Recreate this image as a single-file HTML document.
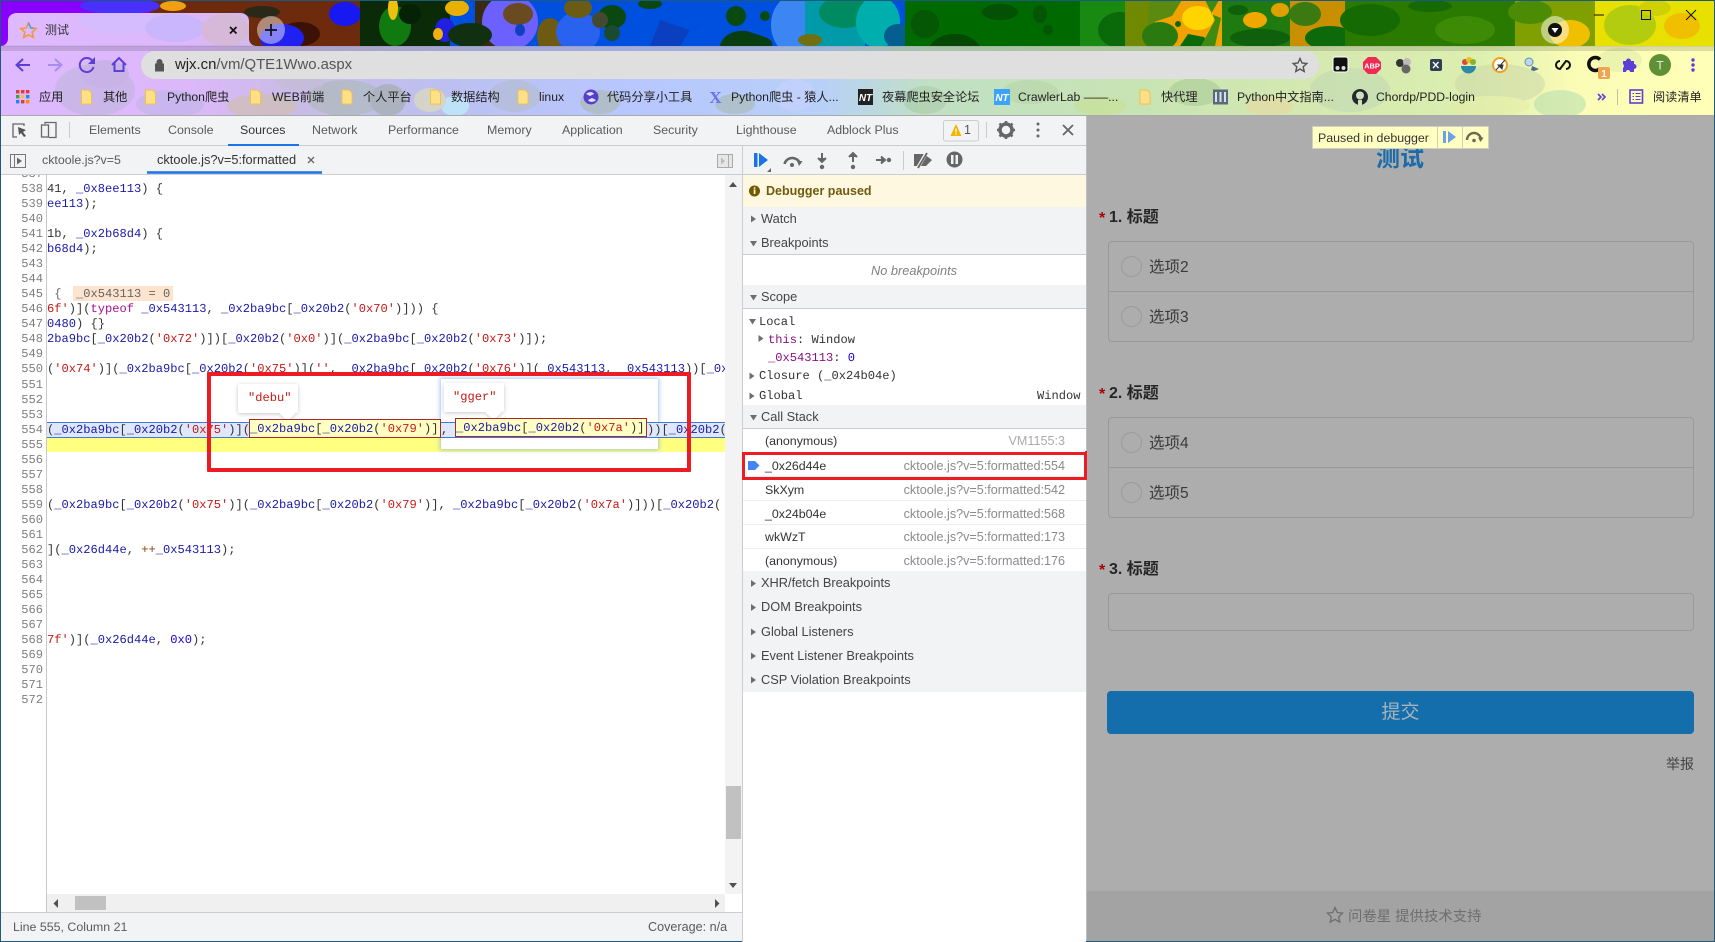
<!DOCTYPE html>
<html lang="zh"><head><meta charset="utf-8"><title>测试</title>
<style>
html,body{margin:0;padding:0;width:1715px;height:942px;overflow:hidden;background:#fff}
body{position:relative;font-family:"Liberation Sans","Noto Sans CJK SC",sans-serif;font-size:12px;color:#222}
div,svg{position:absolute}
.t{white-space:nowrap;line-height:16px;height:16px}
.m{font-family:"Liberation Mono","Noto Sans CJK SC",monospace;font-size:12.08px;text-rendering:geometricPrecision;white-space:pre;line-height:15px;height:15px;color:#333}
.m i{font-style:normal;color:#1a1aa6}.m b{font-weight:normal;color:#c41a16}.m u{text-decoration:none;color:#aa0d91}.m em{font-style:normal;color:#1c00cf}.m s{text-decoration:none;color:#8b4513}
.n{font-family:"Liberation Mono",monospace;font-size:12.08px;text-rendering:geometricPrecision;color:#7f7f7f;left:0;width:43px;text-align:right;line-height:15px;height:15px}
.bm{font-size:12.2px;color:#222}
.tb{font-size:12.4px;color:#5a5a5a;top:122px}
.h{left:761px;font-size:12.8px;color:#444}
.sec{left:743px;width:343px;background:#f1f3f5}
.w{background:#fff}
.cn{left:765px;font-size:12.4px;color:#333}
.cr{right:650px;font-size:12.6px;color:#8a8a8a}
.q{font-weight:bold;font-size:16px;color:#262626;left:1109px;line-height:20px;height:20px;white-space:nowrap}
.st{color:#b00000;left:1099px;font-size:16px;font-weight:bold;line-height:20px;height:20px}
.op{font-size:15.5px;color:#3a3a3a;left:1149px;line-height:20px;height:20px;white-space:nowrap}
.rd{width:19px;height:19px;border:1px solid #9a9a9a;border-radius:50%;left:1121px}
.box{left:1108px;width:584px;border:1px solid #999;border-radius:4px;box-sizing:content-box}
.tip{background:#fff;box-shadow:0 1px 4px rgba(0,0,0,.22);border-radius:2px;width:60px;height:29px}
</style></head><body>

<svg style="left:0;top:0" width="1715" height="116" viewBox="0 0 1715 116">
<defs>
<linearGradient id="lg" x1="0" x2="1" y1="0" y2="0">
<stop offset="0" stop-color="#dfb9ff"/><stop offset=".11" stop-color="#dcb8fa"/><stop offset=".17" stop-color="#c9bce6"/><stop offset=".26" stop-color="#bcc0f0"/><stop offset=".36" stop-color="#b8c6ff"/><stop offset=".48" stop-color="#b8d0f8"/><stop offset=".54" stop-color="#c0e0c4"/><stop offset=".66" stop-color="#c8e4b4"/><stop offset=".76" stop-color="#d4e8b0"/><stop offset=".86" stop-color="#dcefb0"/><stop offset=".92" stop-color="#fbfcb6"/><stop offset="1" stop-color="#ffffb8"/>
</linearGradient>
<clipPath id="lc"><path d="M0 46H116V116H0ZM0 46C6 46 8 42 8 38V21C8 16 12 13 17 13H240C245 13 249 16 249 21V38C249 42 251 46 257 46H1715V116H0Z"/></clipPath>
</defs>
<rect width="1715" height="46" fill="#0050e0"/>
<rect x="0" y="0" width="160" height="46" fill="#8a00ff"/>
<rect x="150" y="0" width="215" height="46" fill="#6e2a0c"/>
<ellipse cx="120" cy="6" rx="40" ry="8" fill="#4a30ff"/>
<ellipse cx="173" cy="6" rx="13" ry="5" fill="#f0a010"/>
<ellipse cx="262" cy="12" rx="18" ry="6" fill="#2a2818"/>
<ellipse cx="300" cy="34" rx="20" ry="12" fill="#3c1206"/>
<ellipse cx="345" cy="14" rx="16" ry="12" fill="#1818f0"/>
<ellipse cx="282" cy="38" rx="22" ry="14" fill="#2020f0"/>
<rect x="360" y="0" width="90" height="46" fill="#0a2a08"/>
<ellipse cx="395" cy="26" rx="16" ry="20" fill="#107a10"/>
<ellipse cx="393" cy="8" rx="5" ry="12" fill="#f0c010"/>
<ellipse cx="410" cy="14" rx="11" ry="10" fill="#062206"/>
<ellipse cx="445" cy="30" rx="10" ry="12" fill="#2020e0"/>
<ellipse cx="438" cy="34" rx="5" ry="6" fill="#f0b010"/>
<ellipse cx="457" cy="8" rx="12" ry="8" fill="#e8b000"/>
<rect x="475" y="0" width="20" height="46" fill="#3a2a10"/>
<ellipse cx="510" cy="22" rx="28" ry="28" fill="#6c60ff"/>
<ellipse cx="470" cy="35" rx="22" ry="12" fill="#103010"/>
<ellipse cx="518" cy="14" rx="15" ry="11" fill="#6a4a20"/>
<ellipse cx="550" cy="36" rx="13" ry="18" fill="#6e5a10"/>
<ellipse cx="578" cy="32" rx="22" ry="20" fill="#2a62f0"/>
<ellipse cx="578" cy="8" rx="14" ry="10" fill="#6a5c14"/>
<ellipse cx="612" cy="17" rx="14" ry="12" fill="#0a4810"/>
<ellipse cx="600" cy="20" rx="8" ry="8" fill="#444a30"/>
<ellipse cx="612" cy="33" rx="8" ry="8" fill="#1a4a30"/>
<ellipse cx="520" cy="30" rx="5" ry="6" fill="#1040c0"/>
<ellipse cx="650" cy="4" rx="12" ry="5" fill="#0a4810"/>
<path d="M660 20L690 30L680 46H650Z" fill="#0a40c0"/>
<ellipse cx="736" cy="16" rx="10" ry="10" fill="#0a4a10"/>
<path d="M720 46C722 34 738 28 750 32C760 36 775 38 772 46Z" fill="#083e10"/>
<ellipse cx="765" cy="16" rx="5" ry="5" fill="#0a4a10"/>
<ellipse cx="795" cy="25" rx="24" ry="30" fill="#3b86f2"/>
<rect x="805" y="0" width="60" height="46" fill="#009aa8"/>
<ellipse cx="845" cy="12" rx="26" ry="16" fill="#008a60"/>
<ellipse cx="810" cy="40" rx="12" ry="6" fill="#707010"/>
<ellipse cx="878" cy="22" rx="22" ry="26" fill="#00aeae"/>
<ellipse cx="898" cy="36" rx="14" ry="12" fill="#045e90"/>
<rect x="905" y="0" width="190" height="46" fill="#006a00"/>
<ellipse cx="925" cy="24" rx="14" ry="14" fill="#055605"/>
<path d="M930 46C935 34 965 26 980 46Z" fill="#044804"/>
<ellipse cx="1040" cy="14" rx="7" ry="9" fill="#055505"/>
<ellipse cx="1000" cy="12" rx="18" ry="8" fill="#045004"/>
<ellipse cx="1048" cy="30" rx="5" ry="5" fill="#055505"/>
<rect x="1080" y="0" width="60" height="46" fill="#188a12"/>
<ellipse cx="1120" cy="30" rx="22" ry="18" fill="#0a6a0a"/>
<rect x="1125" y="0" width="45" height="46" fill="#6f8a00"/>
<rect x="1155" y="0" width="70" height="46" fill="#f2a200"/>
<ellipse cx="1198" cy="18" rx="16" ry="12" fill="#ffd400"/>
<ellipse cx="1160" cy="36" rx="18" ry="14" fill="#2a7a10"/>
<path d="M1150 0h32l-10 16-24 8z" fill="#5a8a10"/>
<path d="M1180 46l8-12 16 3 6 9z" fill="#0a6a0a"/>
<ellipse cx="1178" cy="24" rx="3" ry="3" fill="#0a6a0a"/>
<path d="M1205 0h14l-8 14 10 4-6 28h-14l14-26z" fill="#3f8a10"/>
<rect x="1222" y="0" width="75" height="46" fill="#1f7a10"/>
<ellipse cx="1255" cy="20" rx="12" ry="8" fill="#f0a800"/>
<ellipse cx="1260" cy="38" rx="30" ry="9" fill="#0e600c"/>
<ellipse cx="1238" cy="10" rx="10" ry="5" fill="#0e600c"/>
<ellipse cx="1280" cy="10" rx="9" ry="7" fill="#e0a000"/>
<rect x="1290" y="0" width="60" height="46" fill="#c89000"/>
<ellipse cx="1305" cy="14" rx="16" ry="12" fill="#3a7a10"/>
<ellipse cx="1330" cy="38" rx="25" ry="12" fill="#0c6a0a"/>
<rect x="1345" y="0" width="175" height="46" fill="#2a7a00"/>
<ellipse cx="1370" cy="20" rx="30" ry="16" fill="#156a04"/>
<ellipse cx="1465" cy="30" rx="30" ry="14" fill="#3d8a06"/>
<ellipse cx="1430" cy="6" rx="22" ry="6" fill="#156a04"/>
<rect x="1515" y="0" width="85" height="46" fill="#7fa000"/>
<ellipse cx="1570" cy="34" rx="20" ry="14" fill="#f0c000"/>
<ellipse cx="1530" cy="12" rx="22" ry="12" fill="#4c8c04"/>
<rect x="1595" y="0" width="120" height="46" fill="#e8e000"/>
<ellipse cx="1630" cy="25" rx="26" ry="20" fill="#b4cc10"/>
<ellipse cx="1682" cy="26" rx="18" ry="13" fill="#f0c000"/>
<ellipse cx="1655" cy="8" rx="16" ry="8" fill="#cfd000"/>

<g clip-path="url(#lc)">
<rect y="0" width="1715" height="116" fill="url(#lg)"/>
<g opacity=".55">
<ellipse cx="125" cy="20" rx="45" ry="14" fill="#ccc0ff"/>
<ellipse cx="175" cy="28" rx="30" ry="14" fill="#bcb4ff"/>
<ellipse cx="225" cy="30" rx="24" ry="16" fill="#d8b8c4"/>
<ellipse cx="95" cy="90" rx="40" ry="26" fill="#bab4d8"/>
<ellipse cx="105" cy="74" rx="24" ry="14" fill="#b8b0d4"/>
<ellipse cx="170" cy="104" rx="34" ry="14" fill="#bcb4e4"/>
<ellipse cx="262" cy="106" rx="35" ry="12" fill="#d0c0a4"/>
<ellipse cx="345" cy="98" rx="38" ry="18" fill="#a8b8b0"/>
<ellipse cx="300" cy="82" rx="24" ry="8" fill="#c4bcd0"/>
<ellipse cx="388" cy="100" rx="18" ry="16" fill="#9caa9c"/>
<ellipse cx="455" cy="106" rx="14" ry="10" fill="#bfffff"/>
<ellipse cx="430" cy="100" rx="16" ry="12" fill="#e8e4a8"/>
<ellipse cx="515" cy="96" rx="26" ry="16" fill="#b2bcc8"/>
<ellipse cx="600" cy="102" rx="20" ry="12" fill="#aab8a0"/>
<ellipse cx="735" cy="104" rx="20" ry="10" fill="#a8b8a8"/>
<ellipse cx="795" cy="95" rx="20" ry="16" fill="#c8d4ff"/>
<ellipse cx="925" cy="100" rx="22" ry="14" fill="#a8c8a4"/>
<ellipse cx="1030" cy="92" rx="28" ry="12" fill="#b4d4a8"/>
<ellipse cx="1100" cy="106" rx="26" ry="10" fill="#c8e090"/>
<ellipse cx="1195" cy="92" rx="26" ry="14" fill="#a8c894"/>
<ellipse cx="1270" cy="106" rx="24" ry="10" fill="#ecd8a0"/>
<ellipse cx="1350" cy="90" rx="40" ry="22" fill="#c0d8b4"/>
<ellipse cx="1500" cy="84" rx="45" ry="20" fill="#ccd8a8"/>
<ellipse cx="1560" cy="104" rx="26" ry="14" fill="#b4dcb0"/>
<ellipse cx="1490" cy="106" rx="40" ry="10" fill="#e4eca8"/>
<ellipse cx="1620" cy="60" rx="22" ry="12" fill="#dceca8"/>
</g>
<rect y="46" width="1715" height="5" fill="#000" opacity=".13"/>
<rect x="0" y="45.500" width="1715" height="1" fill="#000" opacity=".1"/>
</g>
<rect x="0" y="0" width="1715" height="1" fill="#1a5a80"/>

<!-- tab icons -->
<path d="M28.500 23l2.300 5 5.400.6-4 3.600 1.100 5.300-4.800-2.700-4.800 2.700 1.100-5.300-4-3.600 5.400-.6z" fill="none" stroke="#f29a3a" stroke-width="1.600"/>
<path d="M28.500 23l2.300 5h3" fill="none" stroke="#4aa0e0" stroke-width="1.600"/>
<path d="M230 27l6.500 6.500M236.500 27l-6.500 6.500" stroke="#111" stroke-width="1.700"/>
<circle cx="271" cy="30" r="14" fill="#fff" opacity=".45"/>
<path d="M265 30h12M271 24v12" stroke="#111" stroke-width="1.700"/>
<!-- nav -->
<g fill="none" stroke="#5b3fd6" stroke-width="2">
<path d="M30 65H17M23 59l-6.500 6 6.500 6"/>
<path d="M48 65h13M55 59l6.500 6-6.500 6" stroke="#a98cf0"/>
<path d="M92.500 61a7 7 0 1 0 1 6"/>
<path d="M112 65l7-7 7 7M114.500 63v8h9v-8"/>
</g>
<path d="M95 57v7h-7z" fill="#5b3fd6"/>
<rect x="141" y="51" width="1178" height="28" rx="14" fill="#dfdfdf"/>
<path d="M155.500 64h8v7h-8zM157 64v-2a2.500 2.500 0 0 1 5 0v2" fill="#555" stroke="#555" stroke-width="1"/>
<path d="M1300 58.500l2 4.500 4.800.5-3.600 3.200 1 4.800-4.200-2.500-4.200 2.500 1-4.800-3.600-3.200 4.800-.5z" fill="none" stroke="#555" stroke-width="1.400"/>
<!-- window -->
<path d="M1594 15h10" stroke="#111" stroke-width="1"/><rect x="1641.500" y="10.500" width="9" height="9" fill="none" stroke="#111"/>
<path d="M1686 10l10 10M1696 10l-10 10" stroke="#111" stroke-width="1"/>
<circle cx="1555" cy="30" r="14" fill="#fff" opacity=".5"/><circle cx="1555" cy="30" r="7" fill="#111"/><path d="M1551.500 28h7l-3.500 5z" fill="#fff"/>
<!-- extensions -->
<rect x="1333" y="57" width="15" height="15" rx="2.500" fill="#111" stroke="#fff"/><circle cx="1337.500" cy="68" r="2" fill="#ddd"/><circle cx="1343.500" cy="68" r="2" fill="#ddd"/>
<path d="M1368 57h8l5 5v7l-5 5h-8l-5-5v-7z" fill="#ee2a55"/><text x="1372" y="68.500" text-anchor="middle" font-size="7.500" font-weight="bold" fill="#fff" font-family="Liberation Sans">ABP</text>
<circle cx="1400" cy="63" r="4" fill="#333"/><circle cx="1407" cy="62" r="4" fill="#bbb"/><circle cx="1406" cy="69" r="4.500" fill="#666"/>
<rect x="1430" y="59" width="12" height="12" rx="2" fill="#2d3f50"/><path d="M1433 62l5.500 6M1438.500 62l-5.500 6" stroke="#fff" stroke-width="1.400"/>
<path d="M1461 66h15a7.500 7.500 0 0 1-15 0z" fill="#2a8aa8"/><circle cx="1465" cy="62" r="3" fill="#d84a3a"/><circle cx="1469" cy="60" r="3" fill="#e8c020"/><circle cx="1473" cy="62" r="3" fill="#8ab030"/>
<circle cx="1500" cy="65" r="7" fill="#fff" stroke="#f0a020" stroke-width="2"/><path d="M1496 70l9-10M1498 65h5l-1 4z" fill="#333" stroke="#333" stroke-width="1"/>
<circle cx="1529" cy="62" r="4" fill="#b8d8f0" stroke="#6a90b0"/><path d="M1532 66l7 3-5 2-3-1z" fill="#4a6a8a"/>
<path d="M1560 61a4 4 0 1 0 0 8l6-8a4 4 0 1 1 0 8" fill="none" stroke="#111" stroke-width="2"/>
<path d="M1603 60a6.500 6.500 0 1 0 0 9" fill="none" stroke="#111" stroke-width="3.500" transform="translate(-3 -.5)"/>
<rect x="1598" y="67" width="12" height="12" rx="2" fill="#eea550"/><text x="1604" y="77" text-anchor="middle" font-size="10" font-weight="bold" fill="#fff" font-family="Liberation Sans">1</text>
<path d="M1623 61h3a2.500 2.500 0 0 1 5 0h3v3a2.500 2.500 0 0 1 0 5v3h-4a2 2 0 0 0-4 0h-3v-4a2.500 2.500 0 0 0 0-4z" fill="#5b3fd6"/>
<circle cx="1660" cy="65" r="11" fill="#5f9035"/><text x="1660" y="69.500" text-anchor="middle" font-size="12" fill="#e8f0e0" font-family="Liberation Sans">T</text>
<g fill="#5b3fd6"><circle cx="1693" cy="60" r="1.700"/><circle cx="1693" cy="65" r="1.700"/><circle cx="1693" cy="70" r="1.700"/></g>
<!-- bookmarks icons -->
<g><rect x="16" y="90" width="3.400" height="3.400" fill="#e53935"/><rect x="21" y="90" width="3.400" height="3.400" fill="#e53935"/><rect x="26" y="90" width="3.400" height="3.400" fill="#e53935"/><rect x="16" y="95" width="3.400" height="3.400" fill="#43a047"/><rect x="21" y="95" width="3.400" height="3.400" fill="#fbc02d"/><rect x="26" y="95" width="3.400" height="3.400" fill="#1e88e5"/><rect x="16" y="100" width="3.400" height="3.400" fill="#1e88e5"/><rect x="21" y="100" width="3.400" height="3.400" fill="#e53935"/><rect x="26" y="100" width="3.400" height="3.400" fill="#fb8c00"/></g>
<g fill="#ffe08a" stroke="#efc24a" stroke-width="1">
<path d="M81.500 90h7l3 3v11h-10z"/><path d="M145.500 90h7l3 3v11h-10z"/><path d="M250.500 90h7l3 3v11h-10z"/><path d="M342 90h7l3 3v11h-10z"/><path d="M430.500 90h7l3 3v11h-10z"/><path d="M518 90h7l3 3v11h-10z"/><path d="M1140 90h7l3 3v11h-10z"/>
</g>
<circle cx="591" cy="97" r="7.500" fill="#5540c8"/><path d="M586 94c3-3 7-2 8 0l-4 2zM596 100c-3 3-7 2-8 0l4-2z" fill="#dfe0ff"/>
<text x="715.500" y="103" text-anchor="middle" font-size="17" font-weight="bold" fill="#6a70f0" font-family="Liberation Serif">X</text>
<rect x="858" y="89" width="15" height="16" fill="#222"/><text x="865.500" y="101" text-anchor="middle" font-size="10" font-weight="bold" font-style="italic" fill="#fff" font-family="Liberation Sans">NT</text>
<rect x="994" y="89" width="16" height="16" fill="#3ba4f8"/><text x="1002" y="101" text-anchor="middle" font-size="10" font-weight="bold" font-style="italic" fill="#fff" font-family="Liberation Sans">NT</text>
<rect x="1213" y="89.500" width="15" height="15" fill="#5a6a7e"/><path d="M1216 92v10M1220.500 92v10" stroke="#d8e0e8" stroke-width="2"/><path d="M1224 92h2v10h-2z" fill="#d8e0e8"/>
<circle cx="1360" cy="97" r="8" fill="#24292e"/>
<circle cx="1360" cy="95.500" r="4" fill="#cde0c0"/><rect x="1358" y="100" width="4" height="5" fill="#cde0c0"/>
<path d="M1598 94l3 3-3 3M1602 94l3 3-3 3" fill="none" stroke="#5b3fd6" stroke-width="1.600"/>
<path d="M1617.500 89v16" stroke="#999" opacity=".6"/>
<rect x="1630" y="90" width="12.500" height="13" fill="none" stroke="#5b3fd6" stroke-width="1.600"/><path d="M1632.500 93.500h1.500M1635.500 93.500h5M1632.500 96.500h1.500M1635.500 96.500h5M1632.500 99.500h1.500M1635.500 99.500h5" stroke="#5b3fd6"/>
</svg>

<div class="t" style="left:45px;top:22px;color:#333">测试</div>
<div class="t" style="left:175px;top:57px;font-size:14.9px;color:#555"><span style="color:#222">wjx.cn</span>/vm/QTE1Wwo.aspx</div>
<div class="t bm" style="left:39px;top:89px">应用</div>
<div class="t bm" style="left:103px;top:89px">其他</div>
<div class="t bm" style="left:167px;top:89px">Python爬虫</div>
<div class="t bm" style="left:272px;top:89px">WEB前端</div>
<div class="t bm" style="left:363px;top:89px">个人平台</div>
<div class="t bm" style="left:451px;top:89px">数据结构</div>
<div class="t bm" style="left:539px;top:89px">linux</div>
<div class="t bm" style="left:607px;top:89px">代码分享小工具</div>
<div class="t bm" style="left:731px;top:89px">Python爬虫 - 猿人...</div>
<div class="t bm" style="left:882px;top:89px">夜幕爬虫安全论坛</div>
<div class="t bm" style="left:1018px;top:89px">CrawlerLab ——...</div>
<div class="t bm" style="left:1161px;top:89px">快代理</div>
<div class="t bm" style="left:1237px;top:89px">Python中文指南...</div>
<div class="t bm" style="left:1376px;top:89px">Chordp/PDD-login</div>
<div class="t bm" style="left:1653px;top:89px">阅读清单</div>

<!-- devtools -->
<div style="left:1px;top:116px;width:1085px;height:825px;background:#f2f3f5"></div>
<div style="left:0;top:115px;width:1715px;height:1px;background:#aaa"></div>
<div style="left:0;top:0;width:1px;height:942px;background:#1d5a7c"></div>
<div style="left:0;top:941px;width:1715px;height:1px;background:#1d5a7c"></div>
<div style="left:1714px;top:0;width:1px;height:942px;background:#1d5a7c"></div>
<div style="left:1px;top:145px;width:1085px;height:1px;background:#cbcdd1"></div>
<div style="left:1px;top:174px;width:1085px;height:1px;background:#cbcdd1"></div>
<svg style="left:0;top:116px" width="1086" height="58" viewBox="0 116 1086 58">
<path d="M24 126v-2H13v13h4" fill="none" stroke="#666" stroke-width="1.300"/><path d="M18 127l8 3-3 2 3 4-2 1-3-4-2 2z" fill="#555"/>
<rect x="41.500" y="125" width="7" height="12" fill="none" stroke="#666" stroke-width="1.300"/><path d="M45 124v-1.500h11v15H49" fill="none" stroke="#666" stroke-width="1.300"/>
<path d="M69.500 122v16" stroke="#ccc"/>
<rect x="943.500" y="120.500" width="35" height="20.500" rx="2" fill="none" stroke="#ccc"/>
<path d="M956 124l-5.500 12h11z" fill="#f4b400"/><path d="M956 128.500v4" stroke="#fff" stroke-width="1.300"/><circle cx="956" cy="134" r=".8" fill="#fff"/>
<path d="M986.500 122v16" stroke="#ccc"/>
<circle cx="1006" cy="130" r="6" fill="none" stroke="#666" stroke-width="3.500"/><path d="M1006 121v3M1006 136v3M997 130h3M1012 130h3M999.500 123.500l2.200 2.200M1010.300 134.300l2.200 2.200M1012.500 123.500l-2.200 2.200M1001.700 134.300l-2.200 2.200" stroke="#666" stroke-width="2.500"/>
<g fill="#666"><circle cx="1038" cy="124" r="1.500"/><circle cx="1038" cy="130" r="1.500"/><circle cx="1038" cy="136" r="1.500"/></g>
<path d="M1063 125l10 10M1073 125l-10 10" stroke="#666" stroke-width="1.800"/>
<rect x="10.500" y="154.500" width="15" height="13" fill="none" stroke="#777"/><path d="M14.500 155v12" stroke="#777"/><path d="M17 157.500l5 3.500-5 3.500z" fill="#666"/>
<path d="M147 172.500h175" stroke="#1a73e8" stroke-width="2.500" /><path d="M228 145h71" stroke="#1a73e8" stroke-width="2"/>
<path d="M308 157l6 6M314 157l-6 6" stroke="#666" stroke-width="1.300"/>
<rect x="717.500" y="154.500" width="15" height="13" fill="#e6e6e6" stroke="#aaa"/><path d="M728.500 155v12" stroke="#aaa"/><path d="M721 157.500v7l4-3.500z" fill="#bbb"/>
<path d="M742.500 146v28" stroke="#cbcdd1"/>
<rect x="754" y="153" width="3.500" height="14" fill="#1a73e8"/><path d="M759 153l9 7-9 7z" fill="#1a73e8"/><path d="M771 172v-4l-4 4z" fill="#666"/>
<path d="M784.500 164a8 8 0 0 1 15.500 0" fill="none" stroke="#666" stroke-width="2.500"/><path d="M797 161l5.500 0-3.500 5z" fill="#666"/><circle cx="792" cy="165" r="2" fill="#666"/>
<path d="M822 153v7M818 158l4 4 4-4" fill="#666" stroke="#666" stroke-width="2"/><circle cx="822" cy="167" r="2.200" fill="#666"/>
<path d="M853 162v-8M849 157l4-4 4 4" fill="#666" stroke="#666" stroke-width="2"/><circle cx="853" cy="167" r="2.200" fill="#666"/>
<path d="M876 160h8M881 156.500l4 3.500-4 3.500" fill="#666" stroke="#666" stroke-width="2"/><circle cx="889" cy="160" r="2.200" fill="#666"/>
<path d="M903.500 151v19" stroke="#ccc"/>
<path d="M914 154h10l8 6-6 6h-12z" fill="#666"/><path d="M916 171l12-21" stroke="#f2f3f5" stroke-width="3.500"/><path d="M918 168l9-15" stroke="#666" stroke-width="1.800"/>
<circle cx="954.500" cy="159.500" r="8" fill="#666"/><rect x="951" y="155" width="2.500" height="9" fill="#f2f3f5"/><rect x="955.500" y="155" width="2.500" height="9" fill="#f2f3f5"/>
</svg>
<div class="t tb" style="left:89px">Elements</div>
<div class="t tb" style="left:168px">Console</div>
<div class="t tb" style="left:240px;color:#333">Sources</div>
<div class="t tb" style="left:312px">Network</div>
<div class="t tb" style="left:388px">Performance</div>
<div class="t tb" style="left:487px">Memory</div>
<div class="t tb" style="left:562px">Application</div>
<div class="t tb" style="left:653px">Security</div>
<div class="t tb" style="left:736px">Lighthouse</div>
<div class="t tb" style="left:827px">Adblock Plus</div>
<div class="t" style="left:964px;top:122px;color:#555;font-size:12.500px">1</div>
<div class="t tb" style="left:42px;top:152px">cktoole.js?v=5</div>
<div class="t tb" style="left:157px;top:152px;color:#333;font-size:12.8px">cktoole.js?v=5:formatted</div>

<!-- editor -->
<div class="w" style="left:1px;top:175px;width:741px;height:737px"></div>
<div style="left:46px;top:175px;width:1px;height:737px;background:#c8c8c8"></div>
<div style="left:725px;top:175px;width:17px;height:719px;background:#f3f3f3"></div>
<div style="left:47px;top:894px;width:678px;height:18px;background:#f0f0f0"></div>
<div style="left:726px;top:786px;width:15px;height:53px;background:#c1c1c1"></div>
<div style="left:75px;top:896px;width:31px;height:14px;background:#c1c1c1"></div>
<svg style="left:0;top:175px" width="742" height="737" viewBox="0 175 742 737">
<path d="M729 187l4-5 4 5z" fill="#505050"/><path d="M729 883l4 5 4-5z" fill="#505050"/><path d="M58 899v9l-4.500-4.500z" fill="#505050"/><path d="M715 899v9l4.500-4.500z" fill="#505050"/>
</svg>
<div class="n" style="top:167px;clip-path:inset(8px 0 0 0)">537</div>
<div class="n" style="top:182px">538</div><div class="n" style="top:197px">539</div><div class="n" style="top:212px">540</div><div class="n" style="top:227px">541</div><div class="n" style="top:242px">542</div><div class="n" style="top:257px">543</div><div class="n" style="top:272px">544</div><div class="n" style="top:287px">545</div><div class="n" style="top:302px">546</div><div class="n" style="top:317px">547</div><div class="n" style="top:332px">548</div><div class="n" style="top:347px">549</div><div class="n" style="top:362px">550</div><div class="n" style="top:378px">551</div><div class="n" style="top:393px">552</div><div class="n" style="top:408px">553</div><div class="n" style="top:423px">554</div><div class="n" style="top:438px">555</div><div class="n" style="top:453px">556</div><div class="n" style="top:468px">557</div><div class="n" style="top:483px">558</div><div class="n" style="top:498px">559</div><div class="n" style="top:513px">560</div><div class="n" style="top:528px">561</div><div class="n" style="top:543px">562</div><div class="n" style="top:558px">563</div><div class="n" style="top:573px">564</div><div class="n" style="top:588px">565</div><div class="n" style="top:603px">566</div><div class="n" style="top:618px">567</div><div class="n" style="top:633px">568</div><div class="n" style="top:648px">569</div><div class="n" style="top:663px">570</div><div class="n" style="top:678px">571</div><div class="n" style="top:693px">572</div>

<div class="m" style="left:47px;top:182px">41, <i>_0x8ee113</i>) {</div>
<div class="m" style="left:47px;top:197px"><i>ee113</i>);</div>
<div class="m" style="left:47px;top:227px">1b, <i>_0x2b68d4</i>) {</div>
<div class="m" style="left:47px;top:242px"><i>b68d4</i>);</div>
<div style="left:73px;top:286px;width:100px;height:15px;background:#fde4cf"></div>
<div class="m" style="left:47px;top:287px;color:#666"> {  _0x543113 = 0</div>
<div class="m" style="left:47px;top:302px"><b>6f'</b>)](<u>typeof</u> <i>_0x543113</i>, <i>_0x2ba9bc</i>[<i>_0x20b2</i>(<b>'0x70'</b>)])) {</div>
<div class="m" style="left:47px;top:317px"><i>0480</i>) {}</div>
<div class="m" style="left:47px;top:332px"><i>2ba9bc</i>[<i>_0x20b2</i>(<b>'0x72'</b>)])[<i>_0x20b2</i>(<b>'0x0'</b>)](<i>_0x2ba9bc</i>[<i>_0x20b2</i>(<b>'0x73'</b>)]);</div>
<div class="m" style="left:47px;top:362px;width:678px;overflow:hidden">(<b>'0x74'</b>)](<i>_0x2ba9bc</i>[<i>_0x20b2</i>(<b>'0x75'</b>)](<b>''</b>, <i>_0x2ba9bc</i>[<i>_0x20b2</i>(<b>'0x76'</b>)](<i>_0x543113</i>, <i>_0x543113</i>))[<i>_0x</i></div>

<div style="left:47px;top:437px;width:678px;height:15px;background:#ffff80"></div>
<div style="left:441px;top:379px;width:217px;height:70px;background:#fff;box-shadow:0 0 4px 1px rgba(90,150,240,.55)"></div>
<div style="left:47px;top:422px;width:678px;height:14px;background:#dfe8fb;border-top:1px solid #3f78e0;border-bottom:1px solid #3f78e0"></div>
<div class="m" style="left:47px;top:423px">(<i>_0x2ba9bc</i>[<i>_0x20b2</i>(<b>'0x75'</b>)](</div>
<div class="m" style="left:441px;top:423px">,</div>
<div class="m" style="left:647px;top:423px;width:78px;overflow:hidden">))[<i>_0x20b2</i>(</div>
<div class="tip" style="left:238px;top:384px"></div>
<div style="left:282px;top:408px;width:11px;height:11px;background:#fff;transform:rotate(45deg);box-shadow:2px 2px 3px rgba(0,0,0,.12)"></div>
<div class="tip" style="left:444px;top:383px"></div>
<div style="left:488px;top:407px;width:11px;height:11px;background:#fff;transform:rotate(45deg);box-shadow:2px 2px 3px rgba(0,0,0,.12)"></div>
<div class="m" style="left:248px;top:391px;color:#c41a16">"debu"</div>
<div class="m" style="left:453px;top:390px;color:#c41a16">"gger"</div>
<div style="left:249px;top:419px;width:190px;height:17px;background:#ffffc4;border:1px solid #a52a2a"></div>
<div class="m" style="left:250px;top:422px"><i>_0x2ba9bc</i>[<i>_0x20b2</i>(<b>'0x79'</b>)]</div>
<div style="left:455px;top:418px;width:190px;height:17px;background:#ffffc4;border:1px solid #a52a2a"></div>
<div class="m" style="left:456px;top:421px"><i>_0x2ba9bc</i>[<i>_0x20b2</i>(<b>'0x7a'</b>)]</div>
<div style="left:207px;top:372px;width:476px;height:92px;border:4px solid #ed1c24;border-radius:1px"></div>

<div class="m" style="left:47px;top:498px;width:678px;overflow:hidden">(<i>_0x2ba9bc</i>[<i>_0x20b2</i>(<b>'0x75'</b>)](<i>_0x2ba9bc</i>[<i>_0x20b2</i>(<b>'0x79'</b>)], <i>_0x2ba9bc</i>[<i>_0x20b2</i>(<b>'0x7a'</b>)]))[<i>_0x20b2</i>(</div>
<div class="m" style="left:47px;top:543px">](<i>_0x26d44e</i>, <s>++</s><i>_0x543113</i>);</div>
<div class="m" style="left:47px;top:633px"><b>7f'</b>)](<i>_0x26d44e</i>, <em>0x0</em>);</div>

<!-- status -->
<div style="left:1px;top:912px;width:741px;height:1px;background:#cbcdd1"></div>
<div class="t" style="left:13px;top:919px;font-size:12.400px;color:#5a5a5a">Line 555, Column 21</div>
<div class="t" style="left:648px;top:919px;font-size:12.600px;color:#5a5a5a">Coverage: n/a</div>

<!-- sidebar -->
<div style="left:742px;top:146px;width:1px;height:796px;background:#cbcdd1"></div>
<div class="w" style="left:743px;top:175px;width:343px;height:767px"></div>
<div style="left:743px;top:175px;width:343px;height:32px;background:#fff8e1"></div>
<div class="sec" style="top:207px;height:47px"></div><div style="left:743px;top:254px;width:343px;height:1px;background:#cbcdd1"></div>
<div class="sec" style="top:285px;height:23px"></div><div style="left:743px;top:308px;width:343px;height:1px;background:#cbcdd1"></div>
<div class="sec" style="top:405px;height:23px"></div><div style="left:743px;top:428px;width:343px;height:1px;background:#cbcdd1"></div>
<div style="left:743px;top:476px;width:343px;height:1px;background:#eee"></div><div style="left:743px;top:500px;width:343px;height:1px;background:#eee"></div><div style="left:743px;top:524px;width:343px;height:1px;background:#eee"></div><div style="left:743px;top:548px;width:343px;height:1px;background:#eee"></div>
<div class="sec" style="top:571px;height:121px"></div>
<svg style="left:743px;top:175px" width="343" height="520" viewBox="743 175 343 520">
<circle cx="754.500" cy="191" r="5.500" fill="#6f5a00"/><rect x="753.700" y="189.500" width="1.700" height="4.500" fill="#fff8e1"/><rect x="753.700" y="187.300" width="1.700" height="1.500" fill="#fff8e1"/>
<g fill="#6e6e6e">
<path d="M751 215.500v7l5-3.500z"/>
<path d="M750 241l3.500 5.500 3.500-5.500zM750 295l3.500 5.500 3.500-5.500zM750 415l3.500 5.500 3.500-5.500z"/>
<path d="M749 319l3.500 5.500 3.500-5.500z"/>
<path d="M758.500 335v7l5-3.500z"/><path d="M749.500 372.500v7l5-3.500zM749.500 392.500v7l5-3.500z"/>
<path d="M751 580v7l5-3.500zM751 604v7l5-3.500zM751 628.500v7l5-3.500zM751 652.500v7l5-3.500zM751 676.500v7l5-3.500z"/>
</g>
<path d="M748 461h7l4.500 4.500-4.500 4.500h-7z" fill="#4285f4"/>
</svg>
<div class="t" style="left:766px;top:183px;font-weight:bold;font-size:12.500px;color:#6f5a10">Debugger paused</div>
<div class="t h" style="top:211px">Watch</div>
<div class="t h" style="top:235px">Breakpoints</div>
<div class="t" style="left:871px;top:263px;font-size:12.800px;font-style:italic;color:#808080">No breakpoints</div>
<div class="t h" style="top:289px">Scope</div>
<div class="m" style="left:759px;top:315px">Local</div>
<div class="m" style="left:768px;top:333px"><u style="color:#881280">this</u>: Window</div>
<div class="m" style="left:768px;top:351px"><u style="color:#881280">_0x543113</u>: <em>0</em></div>
<div class="m" style="left:759px;top:369px">Closure (_0x24b04e)</div>
<div class="m" style="left:759px;top:389px">Global</div>
<div class="m" style="left:1037px;top:389px">Window</div>
<div class="t h" style="top:409px">Call Stack</div>
<div class="t cn" style="top:433px">(anonymous)</div><div class="t cr" style="top:433px;color:#aaa">VM1155:3</div>
<div class="t cn" style="top:458px">_0x26d44e</div><div class="t cr" style="top:458px">cktoole.js?v=5:formatted:554</div>
<div class="t cn" style="top:482px">SkXym</div><div class="t cr" style="top:482px">cktoole.js?v=5:formatted:542</div>
<div class="t cn" style="top:506px">_0x24b04e</div><div class="t cr" style="top:506px">cktoole.js?v=5:formatted:568</div>
<div class="t cn" style="top:529px">wkWzT</div><div class="t cr" style="top:529px">cktoole.js?v=5:formatted:173</div>
<div class="t cn" style="top:553px">(anonymous)</div><div class="t cr" style="top:553px">cktoole.js?v=5:formatted:176</div>
<div class="t h" style="top:575px">XHR/fetch Breakpoints</div>
<div class="t h" style="top:599px">DOM Breakpoints</div>
<div class="t h" style="top:624px">Global Listeners</div>
<div class="t h" style="top:648px">Event Listener Breakpoints</div>
<div class="t h" style="top:672px">CSP Violation Breakpoints</div>
<div style="left:742px;top:452px;width:339px;height:22px;border:3px solid #ed1c24"></div>

<!-- page -->
<div style="left:1086px;top:116px;width:628px;height:825px;background:#adadad"></div>
<div style="left:1086px;top:116px;width:1px;height:825px;background:#bcbcc4"></div>
<div style="left:1087px;top:891px;width:627px;height:50px;background:#a3a3a3"></div>
<div style="left:1085px;top:451px;width:2px;height:29px;background:#ed1c24"></div>

<div class="t" style="left:1300px;width:200px;top:144px;height:30px;line-height:30px;text-align:center;font-size:24px;font-weight:bold;color:#1c6bab">测试</div>
<div style="left:1313px;top:127px;width:175px;height:21px;background:#ffffc2;box-shadow:0 0 0 1px #d0d0c0"></div>
<div style="left:1437px;top:127px;width:1px;height:21px;background:#cfcfc0"></div>
<div style="left:1462px;top:127px;width:1px;height:21px;background:#cfcfc0"></div>
<div class="t" style="left:1318px;top:130px;font-size:12.400px;color:#333">Paused in debugger</div>
<svg style="left:1438px;top:127px" width="50" height="21" viewBox="1438 127 50 21">
<rect x="1443" y="131" width="3" height="12" fill="#6ea0e8"/><path d="M1448 131l8 6-8 6z" fill="#6ea0e8"/>
<path d="M1467 140a7 7 0 0 1 14 0" fill="none" stroke="#6a6a55" stroke-width="2.400"/><path d="M1478 137.500h5.500l-3 4.500z" fill="#6a6a55"/><circle cx="1474" cy="140.500" r="1.800" fill="#6a6a55"/>
</svg>

<div class="st" style="top:209px">*</div><div class="q" style="top:208px">1. 标题</div>
<div class="box" style="top:241px;height:99px"></div>
<div style="left:1108px;top:291px;width:586px;height:1px;background:#999"></div>
<div class="rd" style="top:256px"></div><div class="op" style="top:258px">选项2</div>
<div class="rd" style="top:306px"></div><div class="op" style="top:308px">选项3</div>

<div class="st" style="top:385px">*</div><div class="q" style="top:384px">2. 标题</div>
<div class="box" style="top:417px;height:99px"></div>
<div style="left:1108px;top:467px;width:586px;height:1px;background:#999"></div>
<div class="rd" style="top:432px"></div><div class="op" style="top:434px">选项4</div>
<div class="rd" style="top:482px"></div><div class="op" style="top:484px">选项5</div>

<div class="st" style="top:561px">*</div><div class="q" style="top:560px">3. 标题</div>
<div class="box" style="top:593px;height:36px"></div>

<div style="left:1107px;top:691px;width:587px;height:43px;background:#156eac;border-radius:4px;text-align:center;line-height:43px;font-size:19px;color:#a7b3bb">提交</div>
<div class="t" style="left:1666px;top:756px;font-size:14px;color:#444">举报</div>
<svg style="left:1326px;top:906px" width="18" height="18" viewBox="0 0 18 18"><path d="M9 1.500l2.300 5 5.400.6-4 3.700 1.100 5.300L9 13.400l-4.800 2.700 1.100-5.300-4-3.700 5.400-.6z" fill="none" stroke="#6e6e6e" stroke-width="1.300"/></svg>
<div class="t" style="left:1348px;top:909px;font-size:14.400px;color:#6e6e6e">问卷星 提供技术支持</div>
</body></html>
